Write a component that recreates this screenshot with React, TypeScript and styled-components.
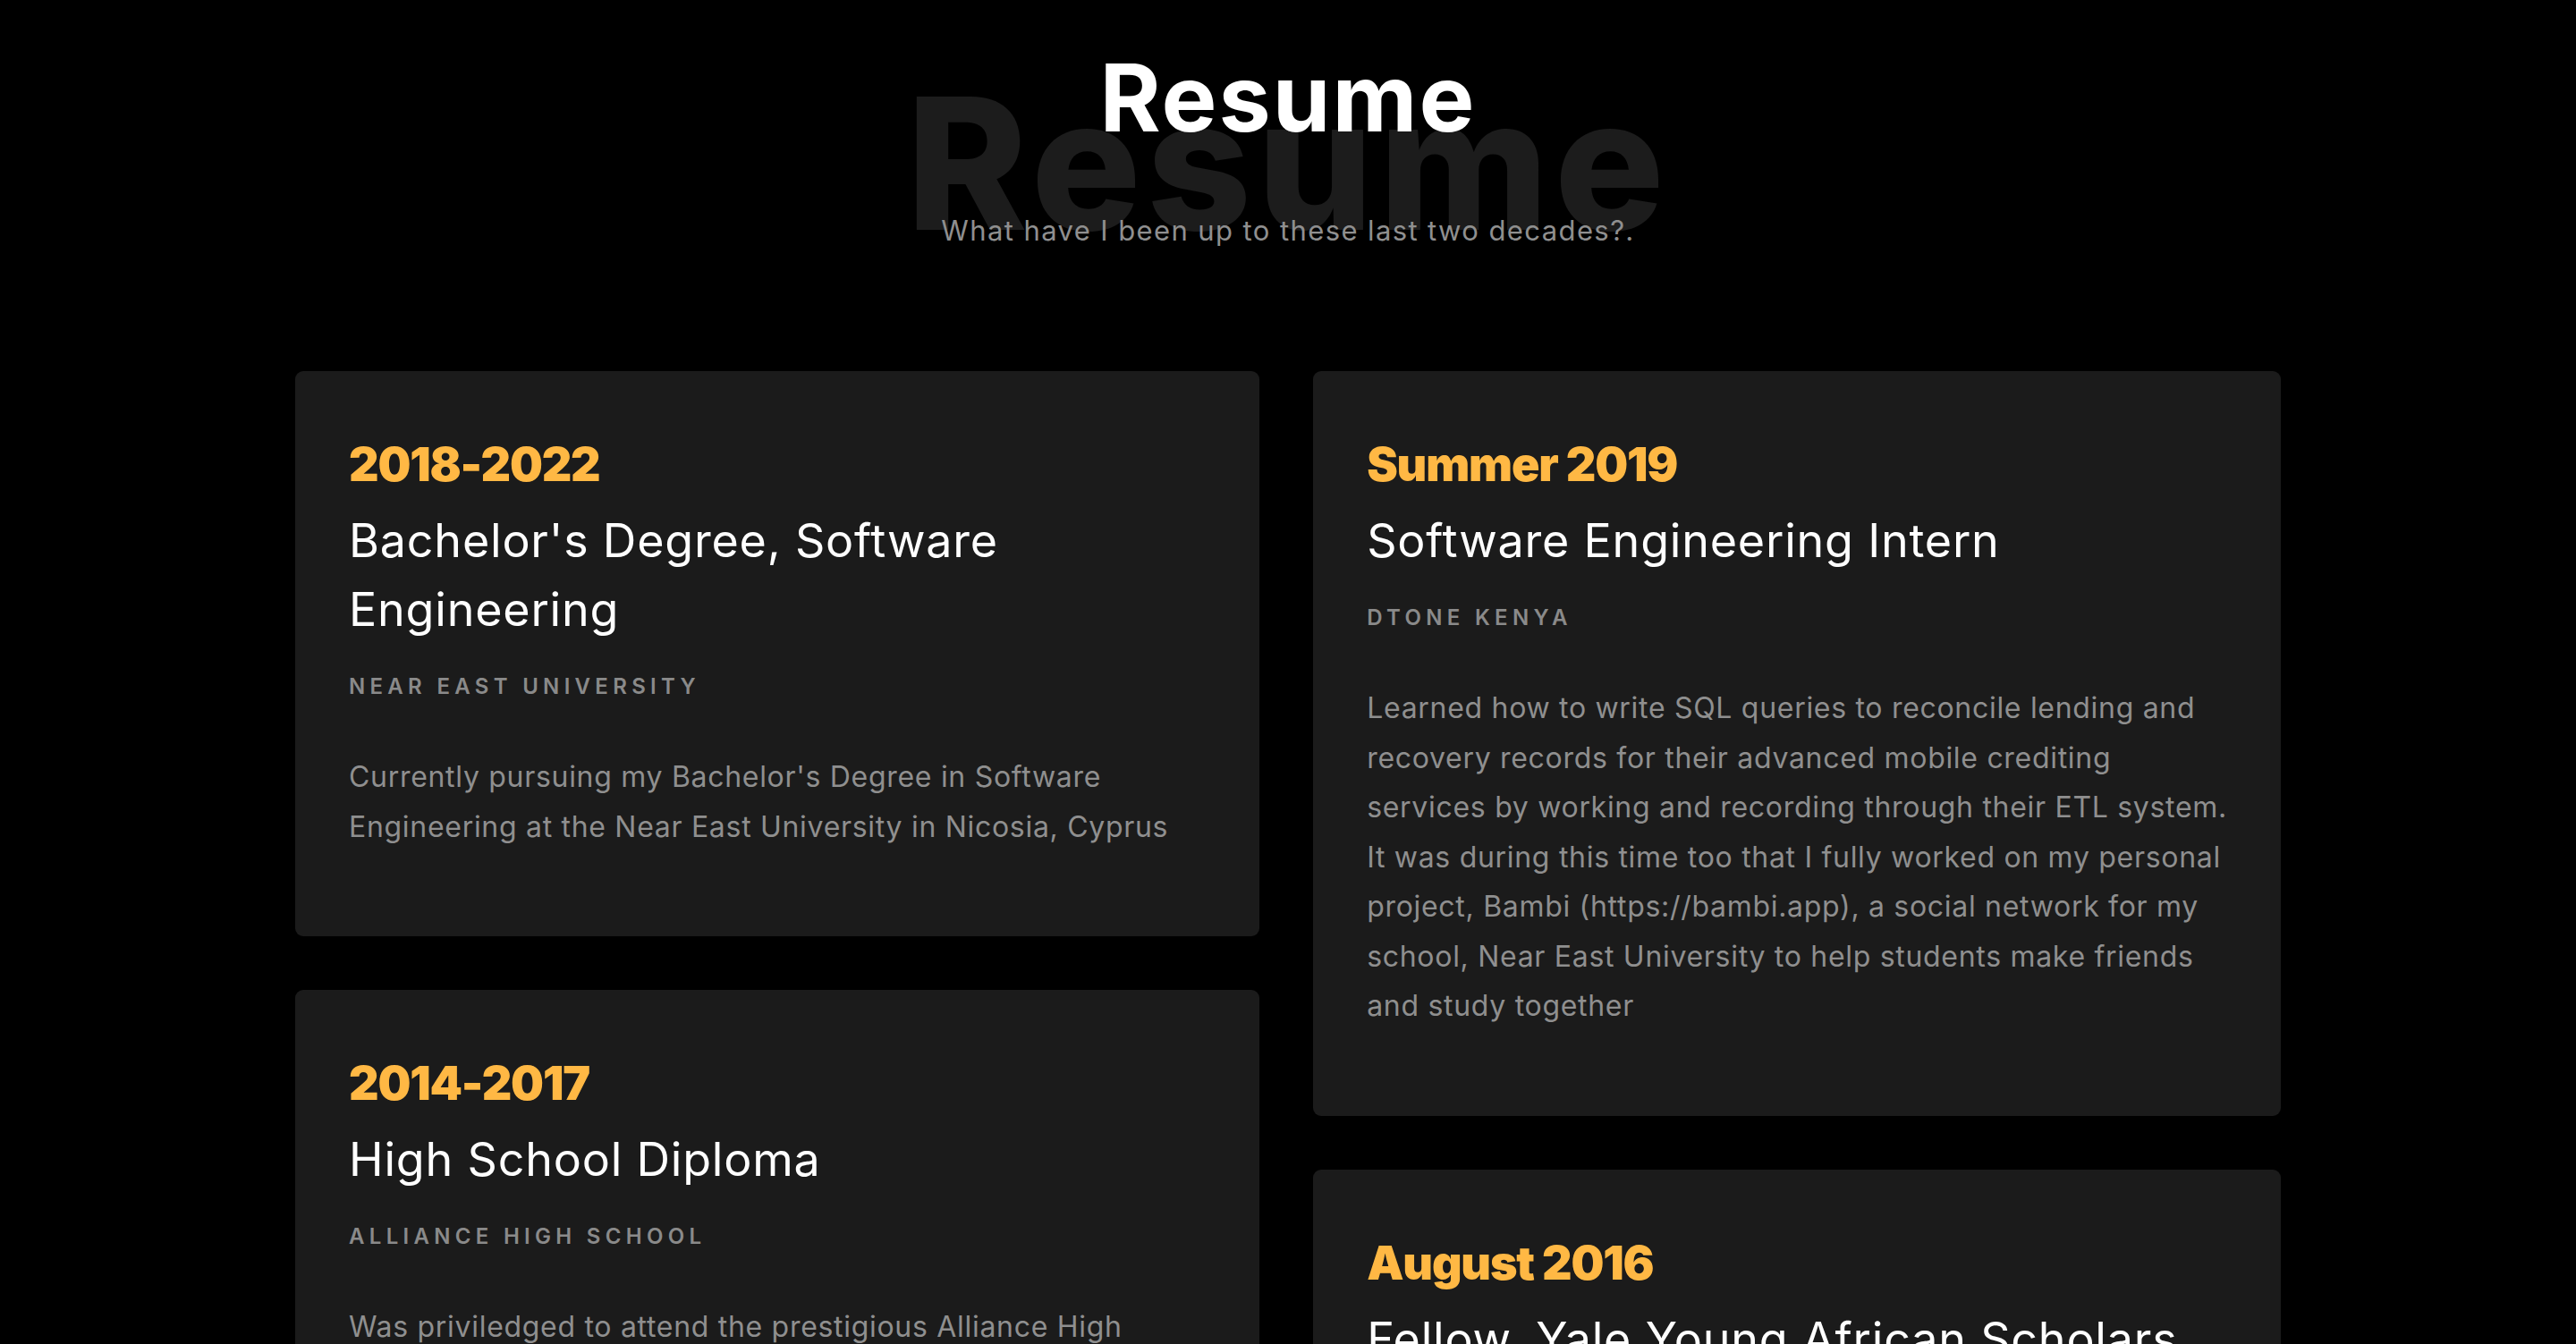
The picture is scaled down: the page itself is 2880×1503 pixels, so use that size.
import React from "react";
import styled, { createGlobalStyle } from "styled-components";

const GlobalStyle = createGlobalStyle`
  * { box-sizing: border-box; }
  html, body { margin: 0; padding: 0; background: #000; }
  body {
    font-family: Inter, "Open Sans", "Liberation Sans", sans-serif;
    color: #fff;
    -webkit-font-smoothing: antialiased;
  }
`;

const Page = styled.main`
  min-height: 100vh;
  background: #000;
  padding-bottom: 120px;
`;

const Header = styled.header`
  position: relative;
  display: flex;
  flex-direction: column;
  align-items: center;
  padding-top: 52px;
  height: 415px;
`;

const Ghost = styled.span`
  position: absolute;
  top: 80px;
  left: 50%;
  transform: translateX(-50%);
  font-size: 205px;
  line-height: 1;
  font-weight: 800;
  letter-spacing: 6px;
  color: #1c1c1c;
  white-space: nowrap;
  z-index: 0;
  user-select: none;
`;

const Title = styled.h1`
  position: relative;
  z-index: 1;
  margin: 0;
  font-size: 104px;
  line-height: 115px;
  font-weight: 700;
  letter-spacing: 2px;
  color: #fff;
`;

const Subtitle = styled.p`
  position: relative;
  z-index: 1;
  margin: 70px 0 0;
  font-size: 31px;
  line-height: 42px;
  letter-spacing: 1.4px;
  color: #8f8f8f;
`;

const Grid = styled.section`
  width: 2220px;
  margin: 0 auto;
  display: flex;
  gap: 60px;
  align-items: flex-start;
`;

const Column = styled.div`
  flex: 1;
  display: flex;
  flex-direction: column;
  gap: 60px;
`;

const Card = styled.article`
  background: #1b1b1b;
  border-radius: 9px;
  padding: 74px 60px 95px;
`;

const Period = styled.div`
  font-size: 52px;
  line-height: 62px;
  font-weight: 900;
  letter-spacing: -1.2px;
  color: #ffb844;
`;

const Role = styled.h2`
  margin: 15px 0 0;
  font-size: 52px;
  line-height: 77px;
  font-weight: 400;
  letter-spacing: 0.8px;
  color: #fff;
`;

const Org = styled.div`
  margin-top: 30px;
  font-size: 24px;
  line-height: 36px;
  font-weight: 600;
  letter-spacing: 5.3px;
  text-transform: uppercase;
  color: #8a8a8a;
`;

const Text = styled.p`
  margin: 55px 0 0;
  font-size: 32px;
  line-height: 55.5px;
  letter-spacing: 0.7px;
  color: #8f8f8f;
  white-space: nowrap;
`;

type Entry = {
  period: string;
  role: string[];
  org: string;
  lines: string[];
};

const left: Entry[] = [
  {
    period: "2018-2022",
    role: ["Bachelor's Degree, Software", "Engineering"],
    org: "Near East University",
    lines: [
      "Currently pursuing my Bachelor's Degree in Software",
      "Engineering at the Near East University in Nicosia, Cyprus",
    ],
  },
  {
    period: "2014-2017",
    role: ["High School Diploma"],
    org: "Alliance High School",
    lines: [
      "Was priviledged to attend the prestigious Alliance High",
      "School in Kikuyu, Kenya, where I sat for my Kenya",
      "Certificate of Secondary Education",
    ],
  },
];

const right: Entry[] = [
  {
    period: "Summer 2019",
    role: ["Software Engineering Intern"],
    org: "DTONE Kenya",
    lines: [
      "Learned how to write SQL queries to reconcile lending and",
      "recovery records for their advanced mobile crediting",
      "services by working and recording through their ETL system.",
      "It was during this time too that I fully worked on my personal",
      "project, Bambi (https://bambi.app), a social network for my",
      "school, Near East University to help students make friends",
      "and study together",
    ],
  },
  {
    period: "August 2016",
    role: ["Fellow, Yale Young African Scholars"],
    org: "Yale University",
    lines: [
      "Selected as one of the fellows of the Yale Young African",
      "Scholars program held in Nairobi, Kenya",
    ],
  },
];

const Multi: React.FC<{ lines: string[] }> = ({ lines }) => (
  <>
    {lines.map((l, i) => (
      <React.Fragment key={i}>
        {l}
        {i < lines.length - 1 && <br />}
      </React.Fragment>
    ))}
  </>
);

const ResumeCard: React.FC<{ entry: Entry }> = ({ entry }) => (
  <Card>
    <Period>{entry.period}</Period>
    <Role>
      <Multi lines={entry.role} />
    </Role>
    <Org>{entry.org}</Org>
    <Text>
      <Multi lines={entry.lines} />
    </Text>
  </Card>
);

export default function App() {
  return (
    <Page>
      <GlobalStyle />
      <Header>
        <Ghost aria-hidden>Resume</Ghost>
        <Title>Resume</Title>
        <Subtitle>What have I been up to these last two decades?.</Subtitle>
      </Header>
      <Grid>
        <Column>
          {left.map((e) => (
            <ResumeCard key={e.period} entry={e} />
          ))}
        </Column>
        <Column>
          {right.map((e) => (
            <ResumeCard key={e.period} entry={e} />
          ))}
        </Column>
      </Grid>
    </Page>
  );
}
